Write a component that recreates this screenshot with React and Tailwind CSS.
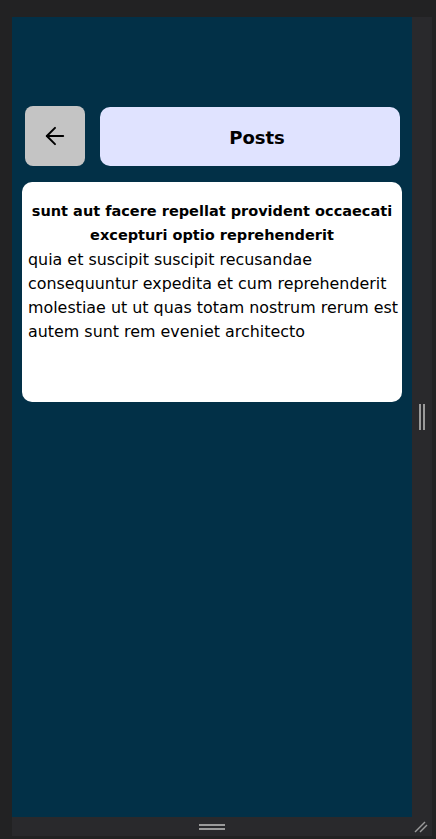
import React from "react";
import { ArrowLeft } from "lucide-react";

export default function App() {
  return (
    <div className="w-[436px] h-[839px] bg-[#222223] pl-[12px] pt-[17px] overflow-hidden" style={{ fontFamily: "'DejaVu Sans', sans-serif" }}>
      <div className="w-[420px] h-[819px] bg-[#29292c] flex flex-col">
        <div className="flex">
          <div className="w-[400px] h-[800px] bg-[#023047] flex flex-col">
            <div className="flex items-start mt-[89px] ml-[13px] gap-[15px]">
              <button className="w-[60px] h-[60px] rounded-[8px] bg-[#c4c4c4] flex items-center justify-center">
                <ArrowLeft size={28} strokeWidth={1.7} color="#000" />
              </button>
              <div className="w-[300px] h-[59px] mt-[1px] rounded-[10px] bg-[#e0e3ff] flex items-center justify-center pl-[14px] pt-[2px]">
                <span className="text-[18px] font-bold text-black">Posts</span>
              </div>
            </div>
            <div className="mt-[16px] ml-[10px] w-[380px] h-[220px] bg-white rounded-[10px] pl-[6px] pr-[2px] pt-[17px]">
              <div className="text-center font-bold text-[14.5px] leading-[24px] text-black pr-[4px]">
                sunt aut facere repellat provident occaecati excepturi optio reprehenderit
              </div>
              <div className="text-[15.9px] leading-[24px] text-black mt-[1px]">
                quia et suscipit suscipit recusandae consequuntur expedita et cum reprehenderit molestiae ut ut quas totam nostrum rerum est autem sunt rem eveniet architecto
              </div>
            </div>
          </div>
          <div className="flex-1 flex items-center justify-center gap-[2px]">
            <div className="w-[2px] h-[26px] bg-[#9a9a9a]" />
            <div className="w-[2px] h-[26px] bg-[#9a9a9a]" />
          </div>
        </div>
        <div className="h-[19px] relative">
          <div className="w-[400px] h-full flex flex-col items-center justify-center gap-[2px]">
            <div className="w-[26px] h-[2px] bg-[#9a9a9a]" />
            <div className="w-[26px] h-[2px] bg-[#9a9a9a]" />
          </div>
          <svg className="absolute right-[4px] bottom-[3px]" width="14" height="14" viewBox="0 0 14 14">
            <line x1="1" y1="13" x2="11" y2="3" stroke="#9a9a9a" strokeWidth="1.5" />
            <line x1="6" y1="13" x2="13" y2="6" stroke="#9a9a9a" strokeWidth="1.5" />
          </svg>
        </div>
      </div>
    </div>
  );
}
